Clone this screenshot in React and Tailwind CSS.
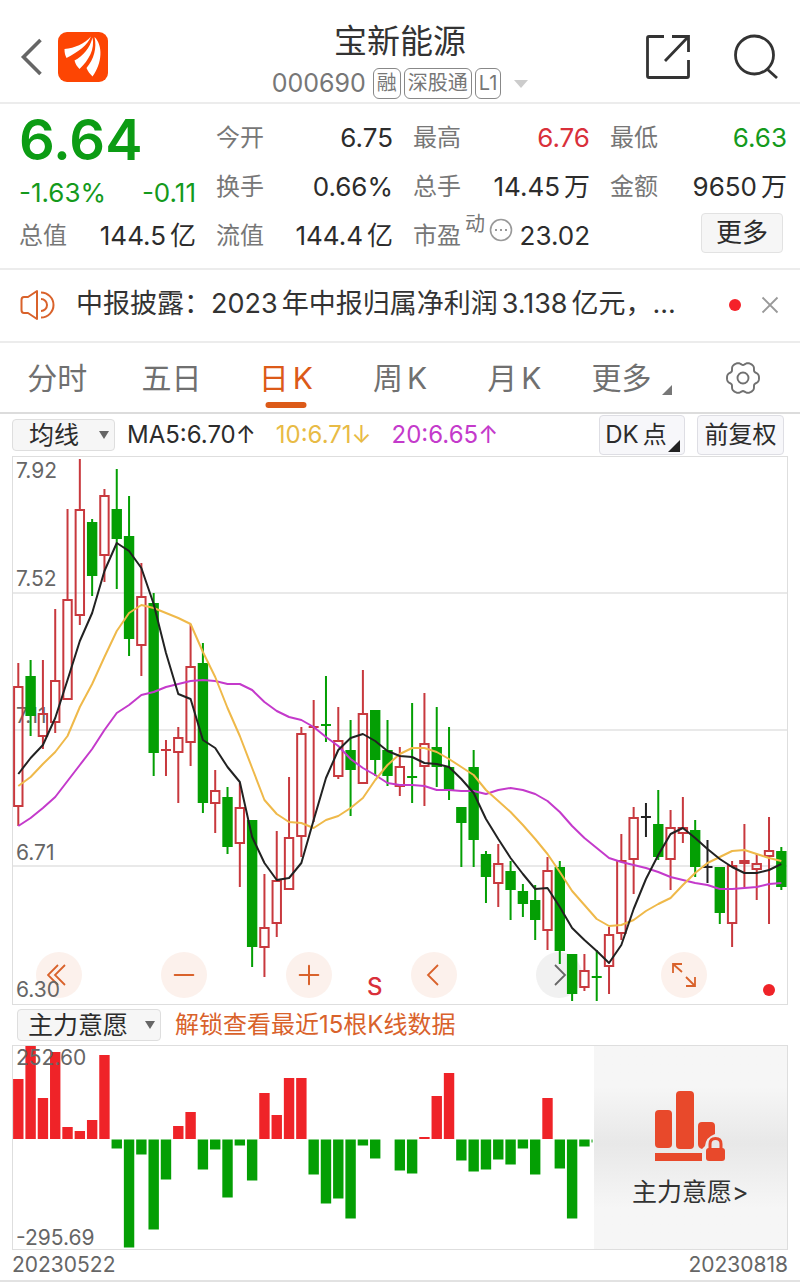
import { Minus, Plus } from 'lucide-react';

const RED = '#c8393e';
const GREEN = '#049f04';
const BLACK = '#222222';

const PITCH = 12.307;
const FIRST_X = 18.3;
const xAt = i => FIRST_X + i * PITCH;

// [kind, high, body top, body bottom, low]
const CANDLES = [
  ['up', 663, 686, 807, 826], ['down', 660, 676, 716, 736], ['up', 660, 713, 737, 749],
  ['up', 609, 680, 723, 733], ['up', 509, 599, 700, 700], ['up', 459, 509, 616, 625],
  ['down', 519, 522, 576, 596], ['up', 489, 495, 556, 582], ['down', 469, 509, 539, 589],
  ['down', 496, 536, 639, 656], ['up', 563, 596, 646, 676], ['down', 593, 603, 753, 776],
  ['up', 740, 750, 750, 776], ['up', 727, 737, 753, 803], ['up', 624, 666, 743, 766],
  ['down', 643, 663, 803, 813], ['up', 770, 790, 804, 833], ['down', 787, 797, 847, 854],
  ['up', 783, 807, 844, 887], ['down', 820, 820, 947, 967], ['up', 874, 927, 948, 977],
  ['up', 831, 880, 924, 937], ['up', 777, 837, 890, 890], ['up', 727, 733, 837, 857],
  ['up', 700, 727, 727, 822], ['down', 676, 725, 725, 742], ['up', 707, 740, 777, 779],
  ['down', 720, 750, 770, 816], ['up', 670, 713, 784, 784], ['down', 710, 710, 760, 776],
  ['down', 720, 750, 776, 786], ['up', 747, 766, 787, 796], ['down', 703, 777, 777, 803],
  ['up', 693, 743, 767, 806], ['down', 707, 747, 767, 787], ['down', 727, 767, 790, 800],
  ['down', 807, 807, 823, 867], ['down', 750, 767, 840, 867], ['down', 851, 854, 877, 903],
  ['up', 844, 863, 884, 907], ['down', 861, 871, 890, 920], ['down', 884, 891, 904, 917],
  ['down', 885, 900, 920, 940], ['up', 857, 870, 931, 950], ['down', 861, 867, 951, 964],
  ['down', 954, 954, 994, 1001], ['up', 954, 970, 988, 991], ['down', 950, 977, 977, 1001],
  ['up', 927, 934, 967, 994], ['up', 834, 860, 934, 940], ['up', 807, 817, 860, 894],
  ['flat', 803, 817, 817, 837], ['down', 790, 824, 857, 860], ['up', 810, 827, 860, 890],
  ['up', 797, 827, 834, 843], ['down', 820, 830, 867, 877], ['flat', 840, 867, 867, 883],
  ['down', 867, 867, 913, 924], ['up', 861, 865, 924, 947], ['up', 824, 860, 864, 887],
  ['up', 854, 863, 870, 900], ['up', 817, 850, 857, 924], ['down', 847, 851, 887, 890]
];

const MA5 = [
  774, 758, 745, 718, 680, 641, 613, 571, 543, 551, 568, 604, 653, 694, 699, 740, 748, 767, 782, 837, 863,
  880, 878, 863, 820, 778, 750, 738, 734, 741, 751, 756, 757, 763, 764, 767, 779, 793, 819, 839, 858, 874,
  889, 888, 907, 928, 940, 951, 963, 945, 909, 879, 855, 834, 828, 838, 849, 859, 867, 873, 873, 870, 864
];
const MA10 = [
  786, 777, 764, 752, 736, 707, 684, 657, 631, 613, 605, 608, 613, 618, 624, 652, 677, 708, 736, 768, 800,
  814, 822, 823, 828, 820, 816, 808, 798, 780, 765, 754, 748, 748, 752, 759, 767, 775, 790, 801, 812, 825,
  839, 854, 872, 891, 905, 919, 926, 925, 920, 911, 904, 898, 885, 873, 863, 857, 851, 850, 854, 858, 861
];
const MA20 = [
  826, 818, 808, 797, 781, 765, 749, 730, 713, 705, 695, 692, 687, 684, 681, 680, 681, 684, 684, 690, 702,
  711, 717, 720, 727, 737, 746, 759, 768, 775, 783, 785, 785, 786, 790, 790, 791, 791, 794, 790, 788, 790,
  794, 801, 812, 826, 838, 848, 858, 862, 865, 868, 872, 877, 880, 883, 885, 889, 889, 888, 887, 884, 883
];

const FLOWS = [
  60, 93, 41, 87, 12, 8, 19, 84, -9, -108, -15, -90, -40, 13, 27, -30, -10, -58, -6, -41, 46, 24, 61, 61,
  -35, -64, -59, -79, -6, -19, 0, -31, -34, 2, 43, 66, -21, -32, -30, -20, -25, -9, -35, 41, -29, -79, -7, -3
];

const toPoints = series => series.map((y, i) => `${xAt(i)},${y}`).join(' ');

const GEAR = Array.from({ length: 72 }, (_, i) => {
  const a = (i * Math.PI) / 36;
  const r = 14.9 + 1.5 * Math.cos(6 * a) - 0.4 * Math.cos(12 * a);
  return `${(18 + r * Math.cos(a)).toFixed(2)},${(18 + r * Math.sin(a)).toFixed(2)}`;
}).join(' ');

function Logo() {
  return (
    <svg viewBox="0 0 50 50" className="size-[50px]" aria-hidden="true">
      <rect width="50" height="50" rx="9" fill="#fd4503" />
      <path d="M6.500 17C17 16 26 12 33 4.500C30 13 20 20 8.500 26C7 23 6.500 20.500 6.500 17Z" fill="#fff" />
      <path d="M16.500 28.500C25 24 32 16 34.500 5.500C37 17 31 28 21.500 37C19 34.500 17.500 32 16.500 28.500Z" fill="#fff" />
      <path d="M28.500 36C36 27 39 16 36.500 5C45 13 44.500 31 34.500 44.500C32 42 30 39.500 28.500 36Z" fill="#fff" />
    </svg>
  );
}

function Badge({ children }) {
  return (
    <span className="rounded-md border border-[#888] px-[3px] text-xl leading-[29px]">{children}</span>
  );
}

function Header() {
  return (
    <header className="grid grid-cols-[1fr_auto_1fr] border-b-2 border-[#ececec] pt-5 pb-[3px]">
      <div className="flex h-[74px] items-center gap-4 pl-5">
        <button aria-label="返回">
          <svg viewBox="0 0 22 38" className="h-[38px] w-[22px]" fill="none" stroke="#666" strokeWidth="3.600">
            <path d="M20.500 2L3.500 19L20.500 36" />
          </svg>
        </button>
        <a href="#home" aria-label="首页"><Logo /></a>
      </div>
      <div className="flex flex-col items-center">
        <h1 className="text-[33px] leading-[42px] text-[#333]">宝新能源</h1>
        <div className="mt-1.5 flex items-center gap-[3px] text-[#777]">
          <span className="mr-1 text-[25px] leading-[31px]">000690</span>
          <Badge>融</Badge>
          <Badge>深股通</Badge>
          <Badge>L1</Badge>
          <svg viewBox="0 0 14 8" className="ml-2.5 h-2 w-3.5" fill="#ccc"><path d="M0 0H14L7 8Z" /></svg>
        </div>
      </div>
      <div className="flex h-[74px] items-center justify-end gap-[42px] pr-[21px]">
        <button aria-label="分享">
          <svg viewBox="0 0 46 46" className="size-[46px]" fill="none" stroke="#333" strokeWidth="2.800">
            <path d="M19 2.500H4Q2.500 2.500 2.500 4V42Q2.500 43.500 4 43.500H42Q43.500 43.500 43.500 42V26M27 2.500H43.500V18M43 3L20 27" />
          </svg>
        </button>
        <button aria-label="搜索">
          <svg viewBox="0 0 46 46" className="size-[46px]" fill="none" stroke="#333" strokeWidth="2.800">
            <circle cx="21.500" cy="21" r="19" />
            <path d="M34 35L44 44" />
          </svg>
        </button>
      </div>
    </header>
  );
}

function Stat({ label, value, unit, tone = 'text-[#2c2c2c]' }) {
  return (
    <div className="flex items-center justify-between whitespace-nowrap">
      <span className="text-2xl text-[#777]">{label}</span>
      <span className={`text-[26px] ${tone}`}>
        {value}
        {unit && <span className="ml-1">{unit}</span>}
      </span>
    </div>
  );
}

function Quote() {
  return (
    <section className="grid auto-rows-[49px] grid-cols-4 gap-x-5 border-b-2 border-[#ececec] pt-[9px] pr-[13px] pb-2 pl-[19px]">
      <div className="flex items-center pt-1 text-[56px] leading-none font-semibold text-[#0c9c14]">6.64</div>
      <Stat label="今开" value="6.75" />
      <Stat label="最高" value="6.76" tone="text-[#d9303a]" />
      <Stat label="最低" value="6.63" tone="text-[#149a1c]" />
      <div className="flex items-center justify-between pt-3 text-[26px] text-[#149a1c]">
        <span>-1.63%</span>
        <span>-0.11</span>
      </div>
      <Stat label="换手" value="0.66%" />
      <Stat label="总手" value="14.45" unit="万" />
      <Stat label="金额" value="9650" unit="万" />
      <Stat label="总值" value="144.5" unit="亿" />
      <Stat label="流值" value="144.4" unit="亿" />
      <Stat
        label={
          <span className="flex items-center">
            市盈
            <span className="ml-1 pb-6 text-xl leading-none">动</span>
            <span className="ml-1 pb-3">
              <svg viewBox="0 0 24 24" className="block size-6" fill="none" stroke="#999" strokeWidth="1.600">
                <circle cx="12" cy="12" r="10.500" />
                <path d="M6 12H8M11 12H13M16 12H18" strokeWidth="2" />
              </svg>
            </span>
          </span>
        }
        value="23.02"
      />
      <div className="flex items-center justify-end pb-1.5">
        <button className="mr-1 h-10 rounded border border-[#e2e2e2] bg-[#f6f6f6] px-3.5 text-[26px] leading-none text-[#2c2c2c]">
          更多
        </button>
      </div>
    </section>
  );
}

function Notice() {
  return (
    <section className="flex h-[73px] items-center border-b-2 border-[#ececec] pr-[21px] pb-0.5 pl-5">
      <svg viewBox="0 0 36 32" className="h-8 w-9 shrink-0" fill="none" stroke="#d9622b" strokeWidth="2">
        <path d="M17 2V30L8 24H4Q1.500 24 1.500 21V11Q1.500 8 4 8H8Z" strokeLinejoin="round" />
        <path d="M21 10A6 6 0 0 1 21 22M21 3.500A12.500 12.500 0 0 1 21 28.500" />
      </svg>
      <a href="#report" className="ml-5 min-w-0 flex-1 truncate text-[27px] text-[#333]">
        中报披露：2023<span className="ml-1">年中报归属净利润</span>
        <span className="mx-1">3.138</span>亿元，...
      </a>
      <span className="ml-4 size-3 rounded-full bg-[#f5222a]" />
      <button aria-label="关闭" className="ml-5">
        <svg viewBox="0 0 18 18" className="size-[18px]" stroke="#999" strokeWidth="1.800">
          <path d="M1.500 1.500L16.500 16.500M16.500 1.500L1.500 16.500" />
        </svg>
      </button>
    </section>
  );
}

function Tabs() {
  return (
    <nav className="grid h-[71px] grid-cols-7 border-b-2 border-[#dcdcdc] text-3xl text-[#707070]">
      <button>分时</button>
      <button>五日</button>
      <button className="relative text-[#dc5a18]">
        日<span className="ml-1">K</span>
        <span className="absolute bottom-1 left-1/2 h-1.5 w-[41px] -translate-x-1/2 rounded-full bg-[#dc5a18]" />
      </button>
      <button>周<span className="ml-1">K</span></button>
      <button>月<span className="ml-1">K</span></button>
      <button className="flex items-center justify-center gap-2.5 pl-1.5">
        更多
        <svg viewBox="0 0 9 9" className="mt-6 size-2.5" fill="#777"><path d="M9 0V9H0Z" /></svg>
      </button>
      <button aria-label="设置" className="flex items-center justify-center">
        <svg viewBox="0 0 36 36" className="size-9" fill="none" stroke="#707070" strokeWidth="1.900">
          <polygon points={GEAR} strokeLinejoin="round" />
          <circle cx="18" cy="18" r="5.500" />
        </svg>
      </button>
    </nav>
  );
}

function Picker({ label, option, className }) {
  return (
    <div className={`relative h-8 ${className}`}>
      <select
        aria-label={label}
        className="size-full appearance-none rounded border border-[#dedede] bg-[#f6f6f6] text-[25px] leading-none text-[#2c2c2c]"
      >
        <option>{option}</option>
      </select>
      <svg viewBox="0 0 10 8" className="pointer-events-none absolute top-3 right-1.5 h-2 w-2.5" fill="#666">
        <path d="M0 0H10L5 8Z" />
      </svg>
    </div>
  );
}

function Averages() {
  return (
    <div className="flex h-[42px] items-center px-3">
      <Picker label="指标" option="均线" className="w-[103px] [&>select]:pl-4" />
      <div className="ml-3 flex flex-1 gap-5 text-2xl whitespace-nowrap">
        <span className="text-[#2c2c2c]">MA5:6.70↑</span>
        <span className="text-[#e8bb45]">10:6.71↓</span>
        <span className="text-[#c43acb]">20:6.65↑</span>
      </div>
      <div className="mr-1 flex gap-3 text-2xl text-[#2c2c2c]">
        <button className="relative h-10 w-[86px] rounded border border-[#dedee4] bg-[#f7f7fa] pr-3">
          DK<span className="ml-1">点</span>
          <svg viewBox="0 0 12 12" className="absolute right-1 bottom-0.5 size-3" fill="#222"><path d="M12 0V12H0Z" /></svg>
        </button>
        <button className="h-10 w-[87px] rounded border border-[#dedee4] bg-[#f7f7fa]">前复权</button>
      </div>
    </div>
  );
}

function Candle({ index, data }) {
  const [kind, high, top, bottom, low] = data;
  const x = xAt(index);
  const color = { up: RED, down: GREEN, flat: BLACK }[kind];

  if (top === bottom) {
    return <path d={`M${x} ${high}V${low}M${x - 5} ${top}H${x + 5}`} stroke={color} strokeWidth="2" />;
  }
  return (
    <g stroke={color} strokeWidth="2">
      <path d={`M${x} ${high}V${top}M${x} ${bottom}V${low}`} />
      <rect
        x={x - 4.2}
        y={top + 1}
        width="8.400"
        height={bottom - top - 2}
        fill={kind === 'up' ? 'none' : color}
      />
    </g>
  );
}

function ControlButton({ label, muted, children }) {
  return (
    <button
      aria-label={label}
      className={`flex size-[46px] items-center justify-center rounded-full ${muted ? 'bg-[#f1f1f1] text-[#666]' : 'bg-[#fcf1ec] text-[#d9622b]'}`}
    >
      {children}
    </button>
  );
}

function StrokeIcon({ d }) {
  return (
    <svg viewBox="0 0 24 24" className="size-6" fill="none" stroke="currentColor" strokeWidth="1.800">
      <path d={d} />
    </svg>
  );
}

function PriceChart() {
  return (
    <div className="relative mx-3 border border-[#dedede]">
      <div className="absolute right-20 bottom-1.5 left-[23px] flex justify-between">
        <ControlButton label="最早"><StrokeIcon d="M11 2L1 12L11 22M18 2L8 12L18 22" /></ControlButton>
        <ControlButton label="缩小"><Minus size={32} strokeWidth={1.5} /></ControlButton>
        <ControlButton label="放大"><Plus size={32} strokeWidth={1.5} /></ControlButton>
        <ControlButton label="向左"><StrokeIcon d="M16 2L6 12L16 22" /></ControlButton>
        <ControlButton label="向右" muted><StrokeIcon d="M8 2L18 12L8 22" /></ControlButton>
        <ControlButton label="全屏">
          <StrokeIcon d="M1 10V1H10M1 1L10 9M23 14V23H14M23 23L14 14" />
        </ControlButton>
      </div>
      <svg viewBox="13 457 774 547" className="pointer-events-none relative block w-full">
        <path d="M13 593H787M13 730H787M13 866H787" stroke="#e2e2e2" strokeWidth="1.500" />
        <g fontSize="21" fill="#666">
          <text x="16" y="478">7.92</text>
          <text x="16" y="586">7.52</text>
          <text x="16" y="723">7.11</text>
          <text x="16" y="860">6.71</text>
          <text x="16" y="997">6.30</text>
        </g>
        {CANDLES.map((data, i) => (
          <Candle key={i} index={i} data={data} />
        ))}
        <g fill="none" strokeWidth="2" strokeLinejoin="round">
          <polyline points={toPoints(MA20)} stroke="#c43acb" />
          <polyline points={toPoints(MA10)} stroke="#efb94a" />
          <polyline points={toPoints(MA5)} stroke="#222" />
        </g>
        <text x="367" y="995" fontSize="24" fontWeight="500" fill="#d9303a">S</text>
        <circle cx="769" cy="990" r="6" fill="#ef2328" />
      </svg>
    </div>
  );
}

function FlowChart() {
  return (
    <div className="relative mx-3 border border-[#dedede]">
      <svg viewBox="13 1046 774 203" className="block w-full">
        {FLOWS.map((v, i) => (
          <rect
            key={i}
            x={xAt(i) - 5.2}
            y={v > 0 ? 1139 - v : 1139.5}
            width={i === FLOWS.length - 1 ? 1 : 10.4}
            height={Math.abs(v)}
            fill={v > 0 ? '#ef2328' : '#049f04'}
          />
        ))}
        <g fontSize="21" fill="#666">
          <text x="16" y="1065">252.60</text>
          <text x="16" y="1245">-295.69</text>
        </g>
      </svg>
      <a
        href="#unlock"
        className="absolute inset-y-0 right-0 flex w-1/4 flex-col items-center justify-center bg-linear-to-b from-[#f6f6f6] from-20% via-[#e8e8e8] via-48% to-[#f6f6f6] to-80% pt-2 text-[25px] text-[#333]"
      >
        <svg viewBox="0 0 70 71" className="h-[71px] w-[70px]" fill="#e8492b">
          <rect x="0" y="19" width="17" height="38" rx="4" />
          <rect x="21" y="0" width="18" height="58" rx="4" />
          <path d="M47 31H56Q60 31 60 35V43Q51 46 50 55L47 58Q43 57 43 53V35Q43 31 47 31Z" />
          <path d="M0 62H47V70H0Z" />
          <rect x="51" y="57" width="19" height="13" rx="3" />
          <path d="M55 58V53Q55 47.500 60.500 47.500T66 53V58" fill="none" stroke="#e8492b" strokeWidth="3" />
        </svg>
        <span className="mt-3">主力意愿&gt;</span>
      </a>
    </div>
  );
}

export default function App() {
  return (
    <main className="w-full border-b-2 border-[#e2e2e2] bg-white font-[Inter,'Noto_Sans_CJK_SC',sans-serif]">
      <Header />
      <Quote />
      <Notice />
      <Tabs />
      <Averages />
      <PriceChart />
      <div className="flex h-10 items-center pr-3 pl-[17px]">
        <Picker label="副图指标" option="主力意愿" className="w-36 [&>select]:pl-2.5" />
        <a href="#unlock" className="ml-3.5 text-2xl text-[#d9622b]">解锁查看最近15根K线数据</a>
      </div>
      <FlowChart />
      <div className="flex h-[30px] items-center justify-between px-3 text-[21px] text-[#666]">
        <time>20230522</time>
        <time>20230818</time>
      </div>
    </main>
  );
}
